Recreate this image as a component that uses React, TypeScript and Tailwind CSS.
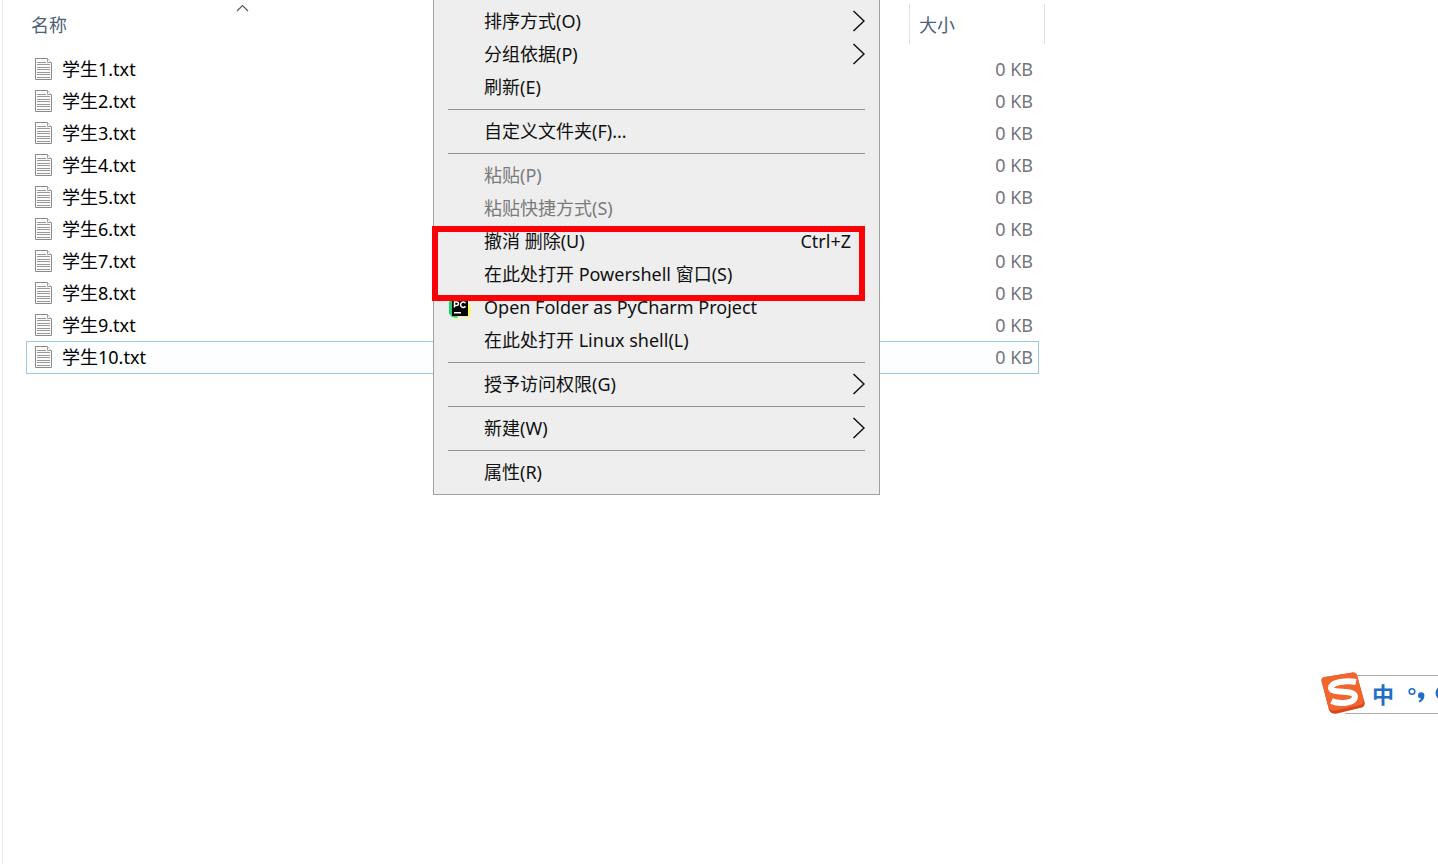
import React from "react";

const FILES = Array.from({ length: 10 }, (_, i) => `学生${i + 1}.txt`);
const SELECTED = "学生10.txt";

type Entry =
  | { kind: "separator" }
  | {
      kind: "item";
      label: string;
      submenu?: boolean;
      disabled?: boolean;
      shortcut?: string;
      icon?: React.ReactNode;
    };

function TextFileIcon() {
  return (
    <svg width="18" height="22" viewBox="0 0 18 22" fill="none" aria-hidden="true">
      <path d="M0.5 0.5H12.5L16.5 4.5V21.5H0.5Z" fill="#fbfbfb" stroke="#8a8a8a" />
      <path d="M12.5 0.5V4.5H16.5" fill="#ffffff" stroke="#a5a5a5" />
      <path
        d="M2 4.5H11M2 6.5H15M2 9.5H15M2 11.5H15M2 14.5H15M2 16.5H15M2 19.5H15"
        stroke="#999999"
      />
    </svg>
  );
}

function PyCharmIcon() {
  return (
    <svg width="24" height="24" viewBox="0 0 24 24" aria-hidden="true">
      <path d="M2 3L10 1L20 5L23 13L21 22L13 20L6 23L1 17Z" fill="#fcf84a" />
      <path d="M1 6L8 1L13 8L9 22L4 21L1 17Z" fill="#21d789" />
      <path d="M1 6L4 3V21L1 17Z" fill="#21d36b" />
      <rect x="4" y="4" width="16" height="16" fill="#000000" />
      <path
        d="M6.5 11.5V6H8.8A1.7 1.7 0 0 1 8.8 9.4H6.5M17.5 7.2A2.7 2.7 0 1 0 17.5 10.3"
        fill="none"
        stroke="#ffffff"
        strokeWidth="1.5"
      />
      <rect x="6" y="16" width="7" height="1.5" fill="#ffffff" />
    </svg>
  );
}

function SubmenuArrow() {
  return (
    <svg width="13" height="22" viewBox="0 0 13 22" fill="none" aria-hidden="true">
      <path d="M1.5 1L12 11L1.5 21" stroke="#111111" strokeWidth="1.5" />
    </svg>
  );
}

const MENU: Entry[] = [
  { kind: "item", label: "排序方式(O)", submenu: true },
  { kind: "item", label: "分组依据(P)", submenu: true },
  { kind: "item", label: "刷新(E)" },
  { kind: "separator" },
  { kind: "item", label: "自定义文件夹(F)..." },
  { kind: "separator" },
  { kind: "item", label: "粘贴(P)", disabled: true },
  { kind: "item", label: "粘贴快捷方式(S)", disabled: true },
  { kind: "item", label: "撤消 删除(U)", shortcut: "Ctrl+Z" },
  { kind: "item", label: "在此处打开 Powershell 窗口(S)" },
  { kind: "item", label: "Open Folder as PyCharm Project", icon: <PyCharmIcon /> },
  { kind: "item", label: "在此处打开 Linux shell(L)" },
  { kind: "separator" },
  { kind: "item", label: "授予访问权限(G)", submenu: true },
  { kind: "separator" },
  { kind: "item", label: "新建(W)", submenu: true },
  { kind: "separator" },
  { kind: "item", label: "属性(R)" },
];

function FileTable() {
  return (
    <table className="table-fixed border-separate border-spacing-0">
      <colgroup>
        <col className="w-[432px]" />
        <col className="w-[451px]" />
        <col className="w-[130px]" />
        <col className="w-[6px]" />
      </colgroup>
      <thead>
        <tr className="h-[53px] text-[#4c607a]">
          <th scope="col" className="relative p-0 text-left align-top font-normal">
            <svg
              className="absolute top-1 left-[210px]"
              width="13"
              height="8"
              viewBox="0 0 13 8"
              fill="none"
              aria-hidden="true"
            >
              <path d="M1 7L6.5 1.5L12 7" stroke="#5a5a5a" strokeWidth="1.2" />
            </svg>
            <button type="button" className="mt-[13px] ml-[5px] block h-6 leading-6">
              名称
            </button>
          </th>
          <td className="p-0" />
          <th scope="col" colSpan={2} className="p-0 text-left align-top font-normal">
            <div className="mt-1 h-10 border-x border-[#e2e2e2] pt-[9px]">
              <button type="button" className="ml-[9px] block h-6 leading-6">
                大小
              </button>
            </div>
          </th>
        </tr>
      </thead>
      <tbody>
        {FILES.map((name) => {
          const selected = name === SELECTED;
          const edge = selected
            ? "border-y border-[#a0c8e0] bg-[#fcfeff]"
            : "border-t border-transparent";
          return (
            <tr key={name} aria-selected={selected}>
              <td className={`${edge} border-l p-0`}>
                <div className="flex h-[31px] items-center gap-[9px] pb-px pl-2">
                  <TextFileIcon />
                  <span className="text-black">{name}</span>
                </div>
              </td>
              <td className={`${edge} p-0`} />
              <td className={`${edge} border-r p-0 pr-[5px] pb-px text-right text-[#74747c]`}>0 KB</td>
              <td className="p-0" />
            </tr>
          );
        })}
      </tbody>
    </table>
  );
}

function ContextMenu() {
  return (
    <div
      role="menu"
      className="absolute top-0 left-[433px] w-[447px] border border-t-0 border-[#a0a0a0] bg-[#eeeeee] py-[5px]"
    >
      {MENU.map((entry, i) =>
        entry.kind === "separator" ? (
          <div key={i} role="separator" className="mx-[14px] my-[5px] h-px bg-[#919191]" />
        ) : (
          <button
            key={i}
            type="button"
            role="menuitem"
            disabled={entry.disabled}
            className="flex h-[33px] w-full items-center px-[14px] pb-[2px] text-left text-[#111111] disabled:text-[#7a7a7a]"
          >
            <span className="w-9 shrink-0 pt-[2px]">{entry.icon}</span>
            <span className="grow whitespace-nowrap">{entry.label}</span>
            {entry.shortcut && <span className="pr-[14px]">{entry.shortcut}</span>}
            {entry.submenu && <SubmenuArrow />}
          </button>
        )
      )}
    </div>
  );
}

function InputMethodBar() {
  return (
    <div className="absolute top-[672px] right-0 flex h-[42px] w-[117px] items-center overflow-hidden">
      <div className="absolute top-[3px] right-0 left-6 h-[39px] border-y border-[#ababab] bg-white" />
      <svg className="relative shrink-0" width="44" height="42" viewBox="0 0 44 42" aria-label="Sogou" role="img">
        <path
          d="M4 5L32 0.5Q35 0 36 3L43.5 30Q44.5 34 41 35.5L16 41.5Q10 42.5 8 38L0.5 9Q0 5.5 4 5Z"
          fill="#d9481c"
        />
        <path
          d="M4 5L32 0.5Q35 0 36 3L42.5 28Q43 32 39 33L14 38.5Q9 39.5 7.5 35L0.5 9Q0 5.5 4 5Z"
          fill="#f2652d"
        />
        <path
          d="M35 10C26 8 9.5 10 10 16C11 22.5 33.5 17 34 24.5C34 31.5 18 32.5 10.500 29"
          fill="none"
          stroke="#ffffff"
          strokeWidth="6"
        />
      </svg>
      <button
        type="button"
        className="relative ml-[6px] w-6 shrink-0 pt-[2px] text-[22px] leading-8 font-bold text-[#1f6fc4]"
      >
        中
      </button>
      <button type="button" aria-label="中文标点" className="relative ml-3 shrink-0">
        <svg width="20" height="22" viewBox="0 0 20 22" aria-hidden="true">
          <circle cx="5" cy="9.5" r="2.8" fill="none" stroke="#1f6fc4" strokeWidth="1.6" />
          <path
            d="M11 13.5A3.2 3.2 0 1 1 17.4 13.5Q17.4 18.5 12.5 20.5L11.5 19Q14 17.5 14 16.5Q11 16.5 11 13.5Z"
            fill="#1f6fc4"
          />
        </svg>
      </button>
      <svg className="relative ml-2 shrink-0" width="16" height="16" viewBox="0 0 16 16" aria-hidden="true">
        <circle cx="8" cy="8" r="7.5" fill="#1f6fc4" />
      </svg>
    </div>
  );
}

export default function App() {
  return (
    <main className="relative min-h-screen overflow-hidden bg-white pl-[2px] font-['Noto_Sans','Noto_Sans_CJK_SC',sans-serif] text-[18px] leading-6">
      <div className="min-h-screen border-l border-[#ededed] pl-[23px]">
        <FileTable />
      </div>
      <ContextMenu />
      <div className="pointer-events-none absolute top-[226px] left-[432px] h-[75px] w-[433px] border-6 border-[#fb0007]" />
      <InputMethodBar />
    </main>
  );
}
